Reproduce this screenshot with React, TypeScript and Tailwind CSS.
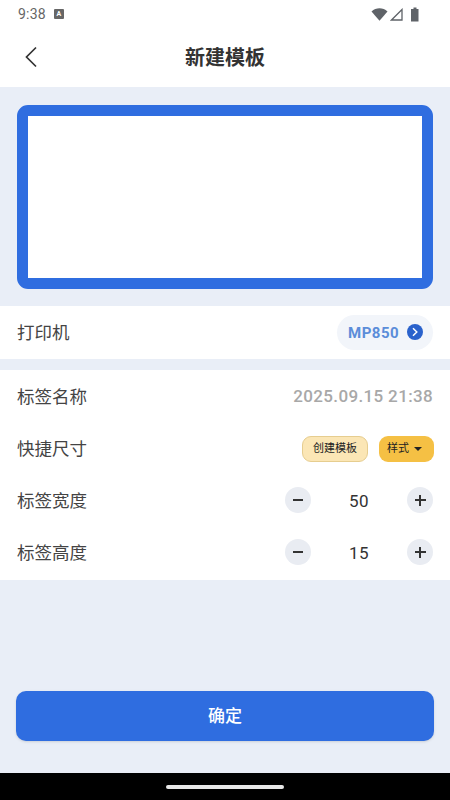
const cjk = { fontFamily: 'Roboto, "Noto Sans CJK SC", sans-serif' };

const Stepper = ({ value }: { value: number }) => (
  <div className="flex items-center">
    <button className="w-[26px] h-[26px] rounded-full bg-[#e9ecf2] flex items-center justify-center">
      <span className="w-[10px] h-[1.5px] bg-[#333]" />
    </button>
    <span className="w-[96px] text-center text-[17px] leading-none text-[#333] tracking-[0.4px] pt-[3px]">{value}</span>
    <button className="relative w-[26px] h-[26px] rounded-full bg-[#e9ecf2] flex items-center justify-center">
      <span className="w-[11px] h-[1.5px] bg-[#333]" />
      <span className="absolute w-[1.5px] h-[11px] bg-[#333]" />
    </button>
  </div>
);

const Row = ({ label, children }: { label: string; children: React.ReactNode }) => (
  <div className="h-[52px] flex items-center justify-between pl-[17px] pr-[17px]">
    <span className="text-[17.5px] text-[#444] pt-[3px]">{label}</span>
    {children}
  </div>
);

export default function App() {
  return (
    <div className="w-[450px] h-[800px] flex flex-col bg-[#e9eef7] overflow-hidden" style={cjk}>
      {/* Status bar */}
      <div className="h-[27px] bg-white flex items-center justify-between pl-[18px] pr-[30px] pt-[1px]">
        <div className="flex items-center gap-[8px]">
          <span className="text-[14px] text-[#666] tracking-[0.2px]">9:38</span>
          <span className="w-[10px] h-[10px] rounded-[1px] bg-[#666] flex items-center justify-center text-[7px] font-bold text-white leading-none">A</span>
        </div>
        <div className="flex items-center gap-[2px]">
          <svg width="17" height="13" viewBox="0 0 17 13">
            <path d="M0.5 3.5C5 -0.7 12 -0.7 16.5 3.5L8.5 12.8Z" fill="#5f6368" />
          </svg>
          <svg width="13" height="13" viewBox="0 0 13 13">
            <path d="M12 1.5V12H1.5Z" fill="none" stroke="#5f6368" strokeWidth="1.3" />
          </svg>
          <svg width="10" height="15" viewBox="0 0 10 15" className="ml-[5px]">
            <path d="M3.5 0.5H6.5V2H8.5V14.5H1V2H3.5Z" fill="#5f6368" />
          </svg>
        </div>
      </div>

      {/* Header */}
      <div className="h-[60px] bg-white relative flex items-center justify-center">
        <svg width="14" height="22" viewBox="0 0 14 22" className="absolute left-[24px] top-[19px]">
          <path d="M12 1.5L2.5 11L12 20.5" fill="none" stroke="#333" strokeWidth="1.7" />
        </svg>
        <h1 className="text-[20px] font-bold text-[#333] pt-[1px]">新建模板</h1>
      </div>

      {/* Preview */}
      <div className="px-[17px] pt-[18px] pb-[17px]">
        <div className="h-[184px] rounded-[11px] border-[11px] border-[#2f6de0] bg-white" />
      </div>

      {/* Printer */}
      <div className="h-[53px] bg-white flex items-center justify-between pl-[17px] pr-[17px]">
        <span className="text-[17.5px] text-[#444] pt-[2px]">打印机</span>
        <div className="h-[35px] w-[96px] rounded-full bg-[#f2f5fa] flex items-center justify-between pl-[11px] pr-[10px]">
          <span className="text-[15px] font-bold text-[#5b8dd9] tracking-[0.5px] pt-[1px]">MP850</span>
          <span className="w-[16px] h-[16px] rounded-full bg-[#2a62cc] flex items-center justify-center -mt-[1px]">
            <svg width="8" height="10" viewBox="0 0 8 10">
              <path d="M2 1.2L5.8 5L2 8.8" fill="none" stroke="#fff" strokeWidth="1.5" />
            </svg>
          </span>
        </div>
      </div>

      {/* Form */}
      <div className="mt-[11px] bg-white h-[210px] flex flex-col">
        <Row label="标签名称">
          <span className="text-[17px] font-medium text-[#a8a8a8] tracking-[0.35px] pt-[2px]">2025.09.15 21:38</span>
        </Row>
        <Row label="快捷尺寸">
          <div className="flex items-center gap-[11px] mt-[1px] -mr-[1px]">
            <span className="w-[66px] h-[26px] rounded-[9px] border border-[#e6cd8f] bg-[#fbe6b5] flex items-center justify-center text-[11px] text-[#222] pt-[2px]">创建模板</span>
            <span className="w-[55px] h-[26px] rounded-[9px] bg-[#f5c044] flex items-center pl-[8px] gap-[5px] text-[11px] text-[#222]">
              <span className="pt-[2px]">样式</span>
              <span className="w-0 h-0 border-l-[4px] border-r-[4px] border-t-[4px] border-l-transparent border-r-transparent border-t-[#222]" />
            </span>
          </div>
        </Row>
        <Row label="标签宽度">
          <Stepper value={50} />
        </Row>
        <Row label="标签高度">
          <Stepper value={15} />
        </Row>
      </div>

      {/* Confirm */}
      <div className="flex-1 flex items-end px-[16px] pb-[32px]">
        <button className="w-full h-[50px] rounded-[10px] bg-[#2f6de0] text-white text-[17px] font-medium pt-[2px] shadow-sm">确定</button>
      </div>

      {/* Nav bar */}
      <div className="h-[27px] bg-black flex items-center justify-center">
        <span className="w-[118px] h-[4px] rounded-full bg-[#e8e8e8]" />
      </div>
    </div>
  );
}
